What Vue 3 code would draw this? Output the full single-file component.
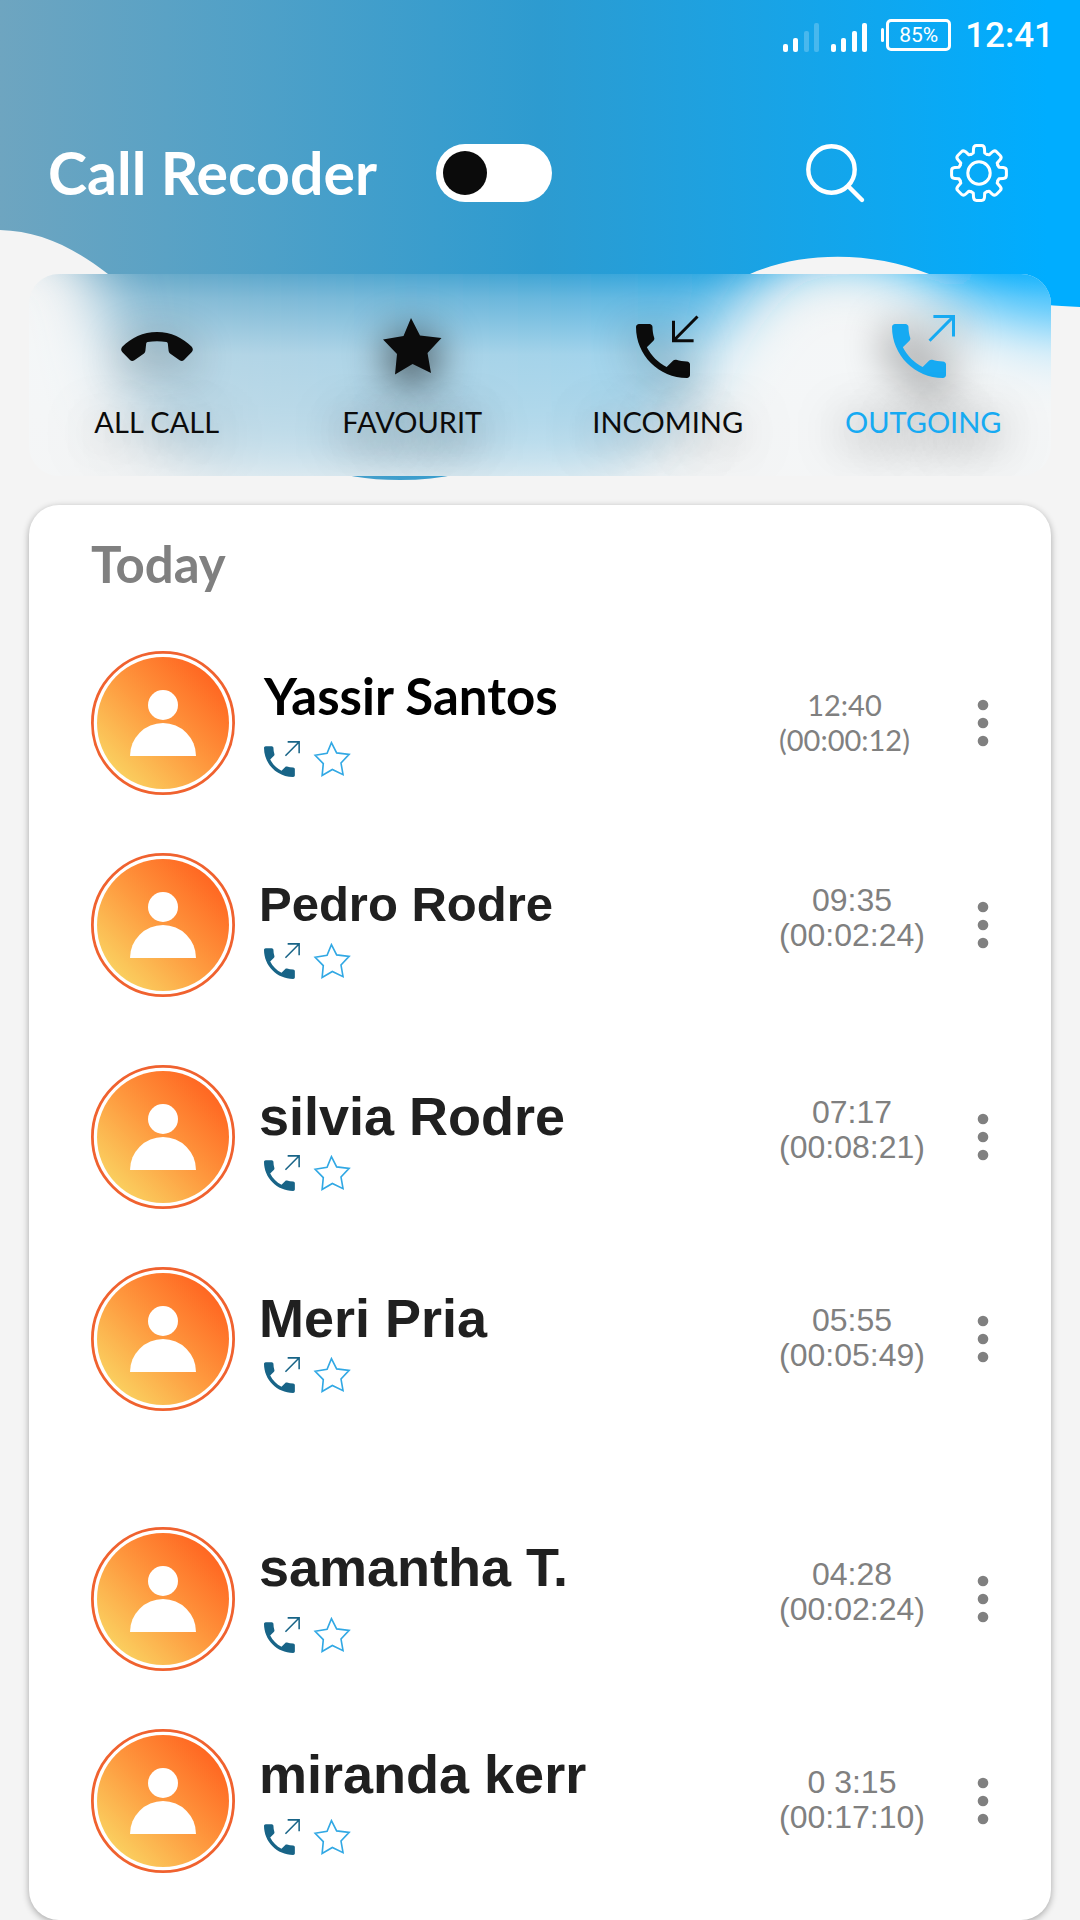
<script setup>
import { ref } from 'vue'

const recording = ref(false)
const activeTab = ref('outgoing')

const tabs = [
  { id: 'all', label: 'ALL CALL' },
  { id: 'favourite', label: 'FAVOURIT' },
  { id: 'incoming', label: 'INCOMING' },
  { id: 'outgoing', label: 'OUTGOING' }
]

const calls = [
  { name: 'Yassir Santos', time: '12:40', length: '(00:00:12)', mods: ['lato', 'raised', 'late'] },
  { name: 'Pedro Rodre', time: '09:35', length: '(00:02:24)', mods: ['compact'] },
  { name: 'silvia Rodre', time: '07:17', length: '(00:08:21)', mods: ['spaced'] },
  { name: 'Meri Pria', time: '05:55', length: '(00:05:49)', mods: ['late'] },
  { name: 'samantha T.', time: '04:28', length: '(00:02:24)', mods: ['apart', 'top-name'] },
  { name: 'miranda kerr', time: '0 3:15', length: '(00:17:10)', mods: ['raised', 'late'] }
]

const gearTeeth = [0, 45, 90, 135, 180, 225, 270, 315]
const starPoints = '28,0 37,17.5 58.5,20 44.5,35 48,55 29.6,46 12,56.5 14,36 0,21.5 20.5,18'
const handset =
  'M17 15.5c-1.25 0-2.45-.2-3.57-.57-.35-.11-.74-.03-1.02.24l-2.2 2.2c-2.83-1.44-5.15-3.75-6.59-6.59l2.2-2.21c.28-.26.36-.65.25-1C5.7 6.45 5.5 5.25 5.5 4c0-.55-.45-1-1-1H1c-.55 0-1 .45-1 1 0 9.39 7.61 17 17 17 .55 0 1-.45 1-1v-3.5c0-.55-.45-1-1-1z'
</script>

<template>
  <div class="screen">
    <svg class="wave" viewBox="0 0 1080 480" preserveAspectRatio="none" aria-hidden="true">
      <defs>
        <linearGradient id="sky" gradientUnits="userSpaceOnUse" x1="0" x2="1080" y1="0" y2="0">
          <stop offset="0" stop-color="#6ea5c0" />
          <stop offset=".5" stop-color="#2d9bd0" />
          <stop offset=".97" stop-color="#00adff" />
        </linearGradient>
      </defs>
      <path
        fill="url(#sky)"
        d="M0 0H1080V307C1010 305 975 293 929 274C872 251 802 251 750 274C640 322 580 480 400 480C240 480 210 360 108 274C72 246 38 231 0 230Z"
      />
    </svg>

    <header class="top">
      <div class="status">
        <svg class="signal" width="36" height="30" viewBox="0 0 36 30" fill="#fff" aria-hidden="true">
          <rect x="0" y="21" width="5" height="8" rx="2" />
          <rect x="10" y="15" width="5" height="14" rx="2" />
          <rect x="21" y="8" width="5" height="21" rx="2" opacity=".22" />
          <rect x="31" y="0" width="5" height="29" rx="2" opacity=".22" />
        </svg>
        <svg class="signal" width="36" height="30" viewBox="0 0 36 30" fill="#fff" aria-hidden="true">
          <rect x="0" y="21" width="5" height="8" rx="2" />
          <rect x="10" y="15" width="5" height="14" rx="2" />
          <rect x="21" y="8" width="5" height="21" rx="2" />
          <rect x="31" y="0" width="5" height="29" rx="2" />
        </svg>
        <span class="battery">85%</span>
        <span class="clock">12:41</span>
      </div>

      <div class="bar">
        <h1>Call Recoder</h1>
        <input v-model="recording" class="toggle" type="checkbox" aria-label="Record calls" />
        <button class="tool search" type="button" aria-label="Search">
          <svg width="58" height="58" viewBox="0 0 58 58" fill="none" stroke="#fff" stroke-linecap="round">
            <circle cx="25.5" cy="25.5" r="23.2" stroke-width="4.4" />
            <path d="M42.5 42.5L56 56" stroke-width="4.4" />
          </svg>
        </button>
        <button class="tool" type="button" aria-label="Settings">
          <svg
            width="58"
            height="58"
            viewBox="-29 -29 58 58"
            fill="none"
            stroke="#fff"
            stroke-width="3"
            stroke-linecap="round"
            stroke-linejoin="round"
          >
            <circle r="11.2" />
            <path
              v-for="angle in gearTeeth"
              :key="angle"
              :transform="`rotate(${angle})`"
              d="M-7.8 -18.8L-5.7 -20L-5.5 -24.2Q-5.3 -27.4 -2.6 -27.4H2.6Q5.3 -27.4 5.5 -24.2L5.7 -20L7.8 -18.8"
            />
          </svg>
        </button>
      </div>
    </header>

    <nav class="tabs" aria-label="Call filters">
      <!-- frosted glass: a softened wave under a pale veil -->
      <svg class="frost" viewBox="29 274 1022 202" preserveAspectRatio="none" aria-hidden="true">
        <defs>
          <filter id="soften" filterUnits="userSpaceOnUse" x="-150" y="0" width="1380" height="640">
            <feGaussianBlur stdDeviation="30" />
          </filter>
          <linearGradient id="veil" x1="0" x2="0" y1="0" y2="1">
            <stop offset="0" stop-color="#f4f8fa" stop-opacity=".1" />
            <stop offset=".12" stop-color="#f4f8fa" stop-opacity=".3" />
            <stop offset=".4" stop-color="#f4f8fa" stop-opacity=".6" />
            <stop offset="1" stop-color="#f4f6f7" stop-opacity=".72" />
          </linearGradient>
        </defs>
        <rect x="29" y="274" width="1022" height="202" fill="#f4f4f4" />
        <path
          fill="url(#sky)"
          filter="url(#soften)"
          d="M0 0H1150V345C1030 350 980 330 935 285C870 240 800 245 755 290C690 370 680 470 560 480H240C130 460 110 380 96 274C72 246 38 220 0 215Z"
        />
        <rect x="29" y="274" width="1022" height="202" fill="url(#veil)" />
      </svg>
      <button
        v-for="tab in tabs"
        :key="tab.id"
        type="button"
        class="tab"
        :class="[tab.id, { active: tab.id === activeTab }]"
        @click="activeTab = tab.id"
      >
        <span class="glyph">
          <svg v-if="tab.id === 'all'" width="72" height="30" viewBox="0 0 72 30" fill="currentColor">
            <path
              d="M36 0C22 0 10 6 1.5 14.5Q-1 17.5 1.2 20L9 28Q11 29.8 13.4 28.2L23 21.5Q24.3 20.4 24.4 18.8L25.2 11.5Q25.4 10.4 26.6 10.1Q36 8.2 45.4 10.1Q46.6 10.4 46.8 11.5L47.6 18.8Q47.7 20.4 49 21.5L58.6 28.2Q61 29.8 63 28L70.8 20Q73 17.5 70.5 14.5C62 6 50 0 36 0Z"
            />
          </svg>
          <svg v-else-if="tab.id === 'favourite'" width="59" height="57" viewBox="0 0 59 57" fill="currentColor">
            <polygon :points="starPoints" />
          </svg>
          <svg v-else width="63" height="63" viewBox="0 0 21 21">
            <path :d="handset" fill="currentColor" />
            <path
              :d="tab.id === 'incoming' ? 'M20.5 .5L12.5 8.6M12.5 1.9V8.6H19.2' : 'M12.5 8.6L20.3 .7M13.8 .5H20.5V7.2'"
              fill="none"
              stroke="currentColor"
            />
          </svg>
        </span>
        <span class="label">{{ tab.label }}</span>
      </button>
    </nav>

    <main class="card">
      <h2>Today</h2>
      <ul class="calls">
        <li v-for="call in calls" :key="call.name" class="call" :class="call.mods">
          <svg class="avatar" width="144" height="144" viewBox="0 0 144 144" aria-hidden="true">
            <defs>
              <linearGradient id="sun" x1=".12" y1=".88" x2=".88" y2=".12">
                <stop offset="0" stop-color="#fad261" />
                <stop offset=".5" stop-color="#fe983e" />
                <stop offset="1" stop-color="#ff6420" />
              </linearGradient>
            </defs>
            <circle cx="72" cy="72" r="70.6" fill="#fff" stroke="#f0622f" stroke-width="2.8" />
            <circle cx="72" cy="72" r="66" fill="url(#sun)" />
            <circle cx="72" cy="54" r="15" fill="#fff" />
            <path d="M39 105A33 33 0 0 1 105 105Z" fill="#fff" />
          </svg>
          <div class="info">
            <h3>{{ call.name }}</h3>
            <div class="marks">
              <svg width="36" height="36" viewBox="0 0 21 21" role="img" aria-label="Outgoing call">
                <path :d="handset" fill="#186487" />
                <path d="M12.5 8.6L20.3 .7M13.8 .5H20.5V7.2" fill="none" stroke="#186487" stroke-width=".9" />
              </svg>
              <button class="star" type="button" aria-label="Add to favourites">
                <svg width="36" height="36" viewBox="-2 -3 62 62" fill="none" stroke="#31a8e4" stroke-width="2.8">
                  <polygon :points="starPoints" />
                </svg>
              </button>
            </div>
          </div>
          <div class="when">
            <p>
              <time>{{ call.time }}</time>
              <span>{{ call.length }}</span>
            </p>
          </div>
          <button class="more" type="button" aria-label="More options">
            <svg width="12" height="48" viewBox="0 0 12 48" fill="#808080">
              <circle cx="6" cy="6" r="5.3" />
              <circle cx="6" cy="24" r="5.3" />
              <circle cx="6" cy="42" r="5.3" />
            </svg>
          </button>
        </li>
      </ul>
    </main>
  </div>
</template>

<style>
body {
  margin: 0;
  background: #f4f4f4;
}
</style>

<style scoped>
.screen {
  position: relative;
  font-family: Lato, sans-serif;
  color: #0b0b0b;
}
h1,
h2,
h3,
p,
ul {
  margin: 0;
  padding: 0;
}
button {
  padding: 0;
  border: 0;
  background: none;
  font: inherit;
  color: inherit;
  cursor: pointer;
}
svg {
  display: block;
  overflow: visible;
}
.wave {
  position: absolute;
  top: 0;
  left: 0;
  width: 100%;
  height: 480px;
}
.top {
  position: relative;
  color: #fff;
}
.status {
  display: flex;
  align-items: center;
  justify-content: flex-end;
  gap: 12px;
  height: 36px;
  padding: 18px 26px 0 0;
  font-family: Roboto, sans-serif;
}
.signal {
  margin-top: 4px;
}
.battery {
  position: relative;
  box-sizing: border-box;
  width: 65px;
  height: 32px;
  margin: 0 2px 2px 7px;
  border: 3px solid #fff;
  border-radius: 5px;
  font-size: 21px;
  line-height: 27px;
  text-align: center;
}
.battery::before {
  content: '';
  position: absolute;
  left: -8px;
  top: 6px;
  width: 3px;
  height: 14px;
  border-radius: 2px;
  background: #fff;
}
.clock {
  font-size: 35px;
  line-height: 40px;
  font-weight: 500;
}
.bar {
  display: flex;
  align-items: center;
  height: 58px;
  padding: 90px 72px 72px 48px;
}
h1 {
  font-size: 59px;
  line-height: 58px;
  font-weight: 700;
}
.toggle {
  appearance: none;
  display: flex;
  align-items: center;
  box-sizing: border-box;
  width: 116px;
  height: 58px;
  margin: 0 0 0 59px;
  padding: 0 7px;
  border-radius: 29px;
  background: #fff;
}
.toggle::before {
  content: '';
  width: 44px;
  height: 44px;
  border-radius: 50%;
  background: #0b0b0b;
}
.toggle:checked {
  justify-content: flex-end;
}
.search {
  margin-left: auto;
  margin-right: 86px;
}
.tabs {
  position: relative;
  display: grid;
  grid-template-columns: repeat(4, 1fr);
  margin: 0 29px;
  border-radius: 30px;
  overflow: hidden;
}
.frost {
  position: absolute;
  top: 0;
  left: 0;
  width: 100%;
  height: 100%;
}
.tab {
  position: relative;
  display: flex;
  flex-direction: column;
  align-items: center;
  gap: 26px;
  padding: 41px 0 36px;
}
.active {
  color: #16aaf2;
}
.glyph {
  display: flex;
  align-items: center;
  height: 63px;
  filter: drop-shadow(0 9px 22px rgba(0, 0, 0, 0.45));
}
.favourite .glyph,
.active .glyph {
  filter: drop-shadow(0 9px 22px #000);
}
.label {
  position: relative;
  font-size: 29px;
  line-height: 36px;
  text-shadow: 0 9px 50px rgba(0, 0, 0, 0.6);
}
.favourite .label,
.active .label {
  text-shadow: 0 9px 50px #000;
}
.card {
  position: relative;
  margin: 29px 29px 0;
  padding: 29px 46px 47px 62px;
  border-radius: 30px;
  background: #fff;
  box-shadow: 0 2px 7px rgba(0, 0, 0, 0.32);
}
h2 {
  font-size: 51px;
  line-height: 60px;
  color: #808080;
}
.calls {
  display: flex;
  flex-direction: column;
  gap: 58px;
  margin-top: 57px;
  list-style: none;
}
.call {
  display: grid;
  grid-template-columns: 144px 1fr 182px 44px;
  height: 144px;
}
.spaced {
  margin-top: 10px;
}
.apart {
  margin-top: 58px;
}
.info {
  display: flex;
  flex-direction: column;
  justify-content: space-between;
  padding: 21px 0 18px 24px;
}
.raised .info {
  padding-top: 15px;
}
.top-name .info {
  padding-top: 10px;
}
h3 {
  font: 700 54px/60px 'Liberation Sans', sans-serif;
  color: #202020;
  white-space: nowrap;
}
.compact h3 {
  font-size: 49px;
}
.lato h3 {
  padding-left: 5px;
  font-family: Lato, sans-serif;
  font-size: 51px;
  color: #000;
}
.marks {
  display: flex;
  gap: 14px;
  padding-left: 5px;
}
.when {
  padding-top: 30px;
  font: 32px/35px 'Liberation Sans', sans-serif;
  color: #808080;
}
.late .when {
  padding-top: 36px;
}
.lato .when {
  font-family: Lato, sans-serif;
  font-size: 29px;
}
.when p {
  display: inline-flex;
  flex-direction: column;
  align-items: center;
}
.more {
  display: flex;
  align-items: center;
  justify-content: center;
}
</style>
